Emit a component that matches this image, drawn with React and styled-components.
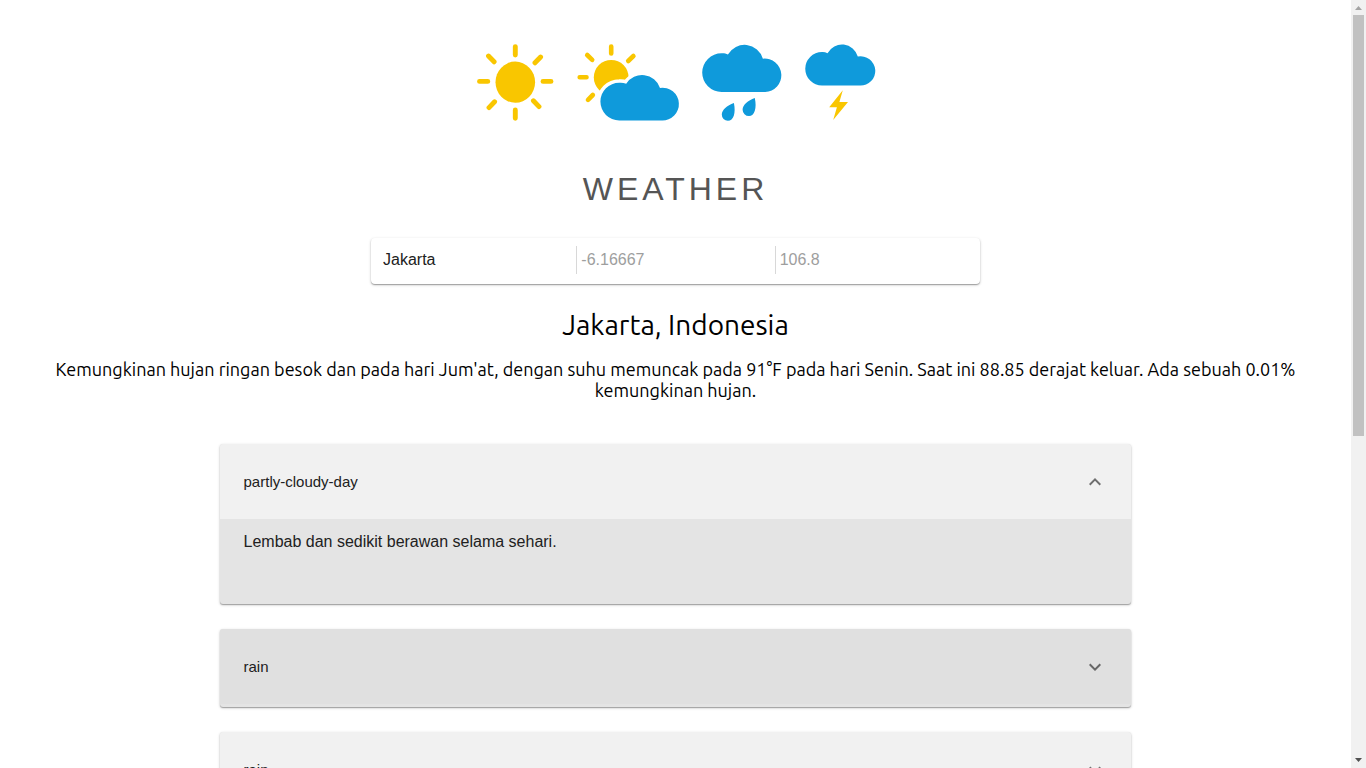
import React, { useState } from "react";
import styled, { createGlobalStyle } from "styled-components";

const GlobalStyle = createGlobalStyle`
  *, *::before, *::after { box-sizing: border-box; }
  body { margin: 0; background: #fff; color: #000; }
`;

const sans = `"Liberation Sans", Arial, sans-serif`;
const humanist = `Ubuntu, "Noto Sans", sans-serif`;
const raised = `0 1px 1px rgba(0, 0, 0, 0.26), 0 1px 3px rgba(0, 0, 0, 0.22)`;

const Shell = styled.div`
  display: flex;
  height: 100vh;
  overflow: hidden;
`;

const Page = styled.main`
  flex: 1;
  min-width: 0;
  overflow-y: auto;
  scrollbar-width: none;
  display: flex;
  flex-direction: column;
  align-items: center;
  padding-top: 44px;
`;

const IconRow = styled.div`
  display: flex;
  flex-shrink: 0;
  gap: 23px;
  svg { display: block; overflow: visible; }
`;

const Brand = styled.h1`
  margin: 48px 0 29px;
  font: 400 32px/40px ${sans};
  letter-spacing: 4px;
  color: #555;
`;

const SearchBar = styled.form`
  display: flex;
  flex-shrink: 0;
  width: 100%;
  max-width: 609px;
  padding: 8px 7px 10px;
  border-radius: 4px;
  background: #fff;
  box-shadow: ${raised};
`;

const Field = styled.input`
  flex: 1;
  min-width: 0;
  height: 28px;
  padding: 0 4px;
  border: 0;
  border-left: 1px solid ${(p) => (p.$divided ? "#d8d8d8" : "transparent")};
  outline: 0;
  background: transparent;
  font: 400 16px/28px ${sans};
  color: #212121;
  &::placeholder { color: #9e9e9e; opacity: 1; }
`;

const Place = styled.h2`
  margin: 23px 0 16px;
  font: 400 28px/36px ${humanist};
`;

const Summary = styled.p`
  margin: 0 0 43px;
  padding: 0 24px;
  text-align: center;
  font: 400 18px/21px ${humanist};
`;

const PanelList = styled.div`
  display: flex;
  flex-direction: column;
  gap: 25px;
  width: 67.5%;
  padding-bottom: 25px;
`;

const Panel = styled.section`
  border-radius: 3px;
  overflow: hidden;
  flex-shrink: 0;
  background: #e4e4e4;
  box-shadow: ${raised};
`;

const PanelHeading = styled.h3`
  margin: 0;
`;

const PanelToggle = styled.button`
  display: flex;
  align-items: center;
  justify-content: space-between;
  width: 100%;
  height: 75px;
  padding: 0 24px;
  border: 0;
  background: ${(p) => (p.$active ? "#e0e0e0" : "#f1f1f1")};
  font: 400 15px/20px ${sans};
  color: #212121;
  text-align: left;
  cursor: pointer;
`;

const PanelBody = styled.div`
  min-height: ${(p) => (p.$open ? "85px" : "3px")};
  padding: ${(p) => (p.$open ? "12px 24px" : "0")};
  font: 400 16px/22px ${sans};
  color: #212121;
`;

const Scrollbar = styled.div`
  display: flex;
  flex-direction: column;
  width: 15px;
  background: #f1f1f1;
`;

const ScrollArrow = styled.svg`
  display: block;
  flex: 0 0 15px;
  width: 15px;
`;

const ScrollTrack = styled.div`
  flex: 1;
  padding: 0 2px;
`;

const ScrollThumb = styled.div`
  height: 57%;
  background: #c1c1c1;
`;

const SKY = "#0f9adb";
const SUN = "#f9c600";

function Sun() {
  return (
    <svg width="77" height="77" viewBox="0 0 77 77" aria-hidden="true">
      <ellipse cx="38.3" cy="38.2" rx="19.8" ry="20.6" fill={SUN} />
      <g stroke={SUN} strokeWidth="4.9" strokeLinecap="round">
        <path d="M38.3 2.6V11M38.3 66V74.3M2.5 37.4H10.8M66 37.4H74" />
        <path d="M11.5 12L17.1 17.8M63.6 13L58 18.8M17.6 57.8L12 63.6M56.4 56.8L62 62.6" />
      </g>
    </svg>
  );
}

function PartlyCloudy() {
  const cloud =
    "M42.3 38.7C44.6 38.5 46.9 38.8 49.2 39.7A18.9 18.9 0 0 1 83 43.9A16.4 16.4 0 1 1 84.9 76.5H42.3A18.9 18.9 0 0 1 42.3 38.7Z";
  return (
    <svg width="102" height="77" viewBox="0 0 102 77" aria-hidden="true">
      <circle cx="34.2" cy="33.4" r="17.4" fill={SUN} />
      <g stroke={SUN} strokeWidth="4.6" strokeLinecap="round">
        <path d="M34.2 2.6V9.4M2.7 33.2H9.5" />
        <path d="M10.2 11L15.2 15.8M56.4 12L51.2 17M15.8 51L11 55.8" />
      </g>
      <path d={cloud} fill={SKY} stroke="#fff" strokeWidth="7" />
      <path d={cloud} fill={SKY} />
    </svg>
  );
}

function Rain() {
  return (
    <svg width="80" height="77" viewBox="0 0 80 77" aria-hidden="true">
      <path
        fill={SKY}
        d="M19.6 9.2C21.8 9 24 9.5 25.9 10.6A19.1 19.1 0 0 1 60.9 14.7A16.7 16.7 0 1 1 63.2 48H19.6A19.4 19.4 0 0 1 19.6 9.2Z"
      />
      <path fill={SKY} d="M31.9 59C25 61.5 19.8 66 19.8 70.6A6.1 6.1 0 0 0 25.9 76.8C31.6 76.8 34 69 31.9 59Z" />
      <path fill={SKY} d="M52.8 54C46 56.3 40.6 61 40.6 65.8A6.4 6.4 0 0 0 47 72.1C52.6 72.1 55 64 52.8 54Z" />
    </svg>
  );
}

function Thunder() {
  return (
    <svg width="70" height="77" viewBox="0 0 70 77" aria-hidden="true">
      <path
        fill={SKY}
        d="M17 8C18.9 7.9 20.7 8.2 22.5 9.2A16.4 16.4 0 0 1 52.8 12.6A14.6 14.6 0 1 1 55 41.5H17A16.7 16.7 0 0 1 17 8Z"
      />
      <path fill={SUN} d="M37.8 46.2L24.2 63.2H31.9L28.2 76L43 58H34.4Z" />
    </svg>
  );
}

function Chevron({ up }) {
  return (
    <svg width="24" height="24" viewBox="0 0 24 24" fill="#000" fillOpacity="0.54" aria-hidden="true">
      <path
        d={
          up
            ? "M12 8l-6 6 1.41 1.41L12 10.83l4.59 4.58L18 14z"
            : "M16.59 8.59L12 13.17 7.41 8.59 6 10l6 6 6-6z"
        }
      />
    </svg>
  );
}

const FORECAST = [
  { icon: "partly-cloudy-day", text: "Lembab dan sedikit berawan selama sehari." },
  { icon: "rain", text: "Hujan ringan di sore hari.", active: true },
  { icon: "rain", text: "Hujan ringan di malam hari." },
];

export default function App() {
  const [open, setOpen] = useState(0);
  const [city, setCity] = useState("Jakarta");

  return (
    <Shell>
      <GlobalStyle />
      <Page>
        <IconRow>
          <Sun />
          <PartlyCloudy />
          <Rain />
          <Thunder />
        </IconRow>
        <Brand>WEATHER</Brand>
        <SearchBar onSubmit={(e) => e.preventDefault()}>
          <Field aria-label="City" value={city} onChange={(e) => setCity(e.target.value)} />
          <Field aria-label="Latitude" placeholder="-6.16667" $divided />
          <Field aria-label="Longitude" placeholder="106.8" $divided />
        </SearchBar>
        <Place>Jakarta, Indonesia</Place>
        <Summary>
          Kemungkinan hujan ringan besok dan pada hari Jum'at, dengan suhu memuncak pada 91°F pada
          hari Senin. Saat ini 88.85 derajat keluar. Ada sebuah 0.01% kemungkinan hujan.
        </Summary>
        <PanelList>
          {FORECAST.map((day, i) => (
            <Panel key={i}>
              <PanelHeading>
                <PanelToggle
                  type="button"
                  aria-expanded={open === i}
                  $active={day.active}
                  onClick={() => setOpen(open === i ? -1 : i)}
                >
                  {day.icon}
                  <Chevron up={open === i} />
                </PanelToggle>
              </PanelHeading>
              <PanelBody $open={open === i}>{open === i && day.text}</PanelBody>
            </Panel>
          ))}
        </PanelList>
      </Page>
      <Scrollbar aria-hidden="true">
        <ScrollArrow viewBox="0 0 15 15">
          <path d="M4 10L7.5 6L11 10Z" fill="#a3a3a3" />
        </ScrollArrow>
        <ScrollTrack>
          <ScrollThumb />
        </ScrollTrack>
        <ScrollArrow viewBox="0 0 15 15">
          <path d="M4 5L7.5 9L11 5Z" fill="#505050" />
        </ScrollArrow>
      </Scrollbar>
    </Shell>
  );
}
